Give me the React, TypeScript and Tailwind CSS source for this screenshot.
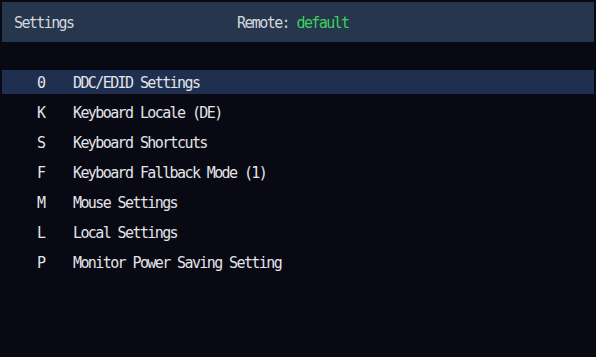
import React from 'react';

const items = [
  { key: '0', label: 'DDC/EDID Settings' },
  { key: 'K', label: 'Keyboard Locale (DE)' },
  { key: 'S', label: 'Keyboard Shortcuts' },
  { key: 'F', label: 'Keyboard Fallback Mode (1)' },
  { key: 'M', label: 'Mouse Settings' },
  { key: 'L', label: 'Local Settings' },
  { key: 'P', label: 'Monitor Power Saving Setting' },
];

const App: React.FC = () => {
  const selected = 0;

  return (
    <div className="w-[598px] h-[361px] bg-white">
      <div
        className="w-[596px] h-[357px] bg-[#090914] p-[2px] text-[15px] tracking-[-1.6px] leading-none"
        style={{ fontFamily: '"DejaVu Sans Mono", "Liberation Mono", monospace' }}
      >
        <div className="h-[40px] bg-[#25364d] flex items-center pl-[12px] pt-[2px] text-[#d4d8de]">
          <span className="w-[223px]">Settings</span>
          <span>
            Remote: <span className="text-[#3fd15c]">default</span>
          </span>
        </div>
        <div className="mt-[28px] flex flex-col gap-[6px]">
          {items.map((item, i) => (
            <div
              key={item.key}
              className={`h-[24px] flex items-center pl-[12px] pt-[3px] text-[#e2e4e8] ${i === selected ? 'bg-[#1f2f50]' : ''}`}
            >
              <span className="w-[59px] pl-[23px]">{item.key}</span>
              <span>{item.label}</span>
            </div>
          ))}
        </div>
      </div>
    </div>
  );
};

export default App;
